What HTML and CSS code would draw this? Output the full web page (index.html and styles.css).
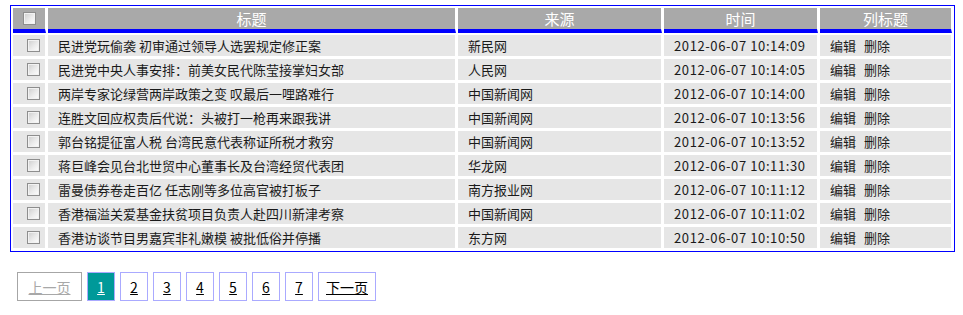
FILE: index.html
```html
<!DOCTYPE html>
<html lang="zh">
<head>
<meta charset="utf-8">
<title>列表</title>
<link rel="stylesheet" href="styles.css">
</head>
<body>
<div class="box">
  <table class="grid">
    <thead>
      <tr>
        <th class="c-chk"><input type="checkbox" class="chk"></th>
        <th class="c-title">标题</th>
        <th class="c-src">来源</th>
        <th class="c-time">时间</th>
        <th class="c-op">列标题</th>
      </tr>
    </thead>
    <tbody>
      <tr><td class="chk-cell"><input type="checkbox" class="chk"></td><td>民进党玩偷袭 初审通过领导人选罢规定修正案</td><td>新民网</td><td class="time">2012-06-07 10:14:09</td><td class="ops"><a>编辑</a><a>删除</a></td></tr>
      <tr><td class="chk-cell"><input type="checkbox" class="chk"></td><td>民进党中央人事安排：前美女民代陈莹接掌妇女部</td><td>人民网</td><td class="time">2012-06-07 10:14:05</td><td class="ops"><a>编辑</a><a>删除</a></td></tr>
      <tr><td class="chk-cell"><input type="checkbox" class="chk"></td><td>两岸专家论绿营两岸政策之变 叹最后一哩路难行</td><td>中国新闻网</td><td class="time">2012-06-07 10:14:00</td><td class="ops"><a>编辑</a><a>删除</a></td></tr>
      <tr><td class="chk-cell"><input type="checkbox" class="chk"></td><td>连胜文回应权贵后代说：头被打一枪再来跟我讲</td><td>中国新闻网</td><td class="time">2012-06-07 10:13:56</td><td class="ops"><a>编辑</a><a>删除</a></td></tr>
      <tr><td class="chk-cell"><input type="checkbox" class="chk"></td><td>郭台铭提征富人税 台湾民意代表称证所税才救穷</td><td>中国新闻网</td><td class="time">2012-06-07 10:13:52</td><td class="ops"><a>编辑</a><a>删除</a></td></tr>
      <tr><td class="chk-cell"><input type="checkbox" class="chk"></td><td>蒋巨峰会见台北世贸中心董事长及台湾经贸代表团</td><td>华龙网</td><td class="time">2012-06-07 10:11:30</td><td class="ops"><a>编辑</a><a>删除</a></td></tr>
      <tr><td class="chk-cell"><input type="checkbox" class="chk"></td><td>雷曼债券卷走百亿 任志刚等多位高官被打板子</td><td>南方报业网</td><td class="time">2012-06-07 10:11:12</td><td class="ops"><a>编辑</a><a>删除</a></td></tr>
      <tr><td class="chk-cell"><input type="checkbox" class="chk"></td><td>香港福溢关爱基金扶贫项目负责人赴四川新津考察</td><td>中国新闻网</td><td class="time">2012-06-07 10:11:02</td><td class="ops"><a>编辑</a><a>删除</a></td></tr>
      <tr><td class="chk-cell"><input type="checkbox" class="chk"></td><td>香港访谈节目男嘉宾非礼嫩模 被批低俗并停播</td><td>东方网</td><td class="time">2012-06-07 10:10:50</td><td class="ops"><a>编辑</a><a>删除</a></td></tr>
    </tbody>
  </table>
</div>
<div class="pager">
  <span class="pg pg-disabled pg-prev">上一页</span>
  <a class="pg pg-num pg-current">1</a>
  <a class="pg pg-num">2</a>
  <a class="pg pg-num">3</a>
  <a class="pg pg-num">4</a>
  <a class="pg pg-num">5</a>
  <a class="pg pg-num">6</a>
  <a class="pg pg-num">7</a>
  <a class="pg pg-next">下一页</a>
</div>
</body>
</html>
```
FILE: styles.css
```css
html, body {
  margin: 0;
  padding: 0;
  background: #fff;
}
body {
  font-family: "Noto Sans CJK SC", "Noto Sans", sans-serif;
  font-size: 13px;
  color: #1a1a1a;
}
.box {
  width: 943px;
  margin: 5px 0 0 10px;
  border: 1px solid #0000ff;
}
.grid {
  width: 943px;
  table-layout: fixed;
  border-collapse: separate;
  border-spacing: 2px;
}
.grid th,
.grid td {
  box-sizing: border-box;
  padding: 0 0 0 10px;
  border-right: 1px solid #fff;
  vertical-align: middle;
  white-space: nowrap;
  overflow: hidden;
}
.grid th {
  height: 25px;
  background: #a9a9a9;
  border-bottom: 4px solid #0000ff;
  color: #fff;
  font-weight: normal;
  font-size: 15px;
  text-align: center;
  padding: 0;
  line-height: 20px;
}
.grid th.c-chk { text-align: left; padding-left: 10px; }
.c-chk { width: 33px; }
.c-title { width: 408px; }
.c-src { width: 204px; }
.c-time { width: 154px; }
.c-op { width: 132px; }
.grid td {
  height: 22px;
  background: #e6e6e6;
  border-bottom: 1px solid #fff;
  line-height: 20px;
}
.grid td.chk-cell { padding-left: 14px; }
.chk {
  -webkit-appearance: none;
  appearance: none;
  display: block;
  width: 13px;
  height: 13px;
  margin: 0;
  border: 1px solid #8e8e8e;
  background: linear-gradient(135deg, #cdcdcd 0%, #ececec 55%, #ffffff 100%);
  box-shadow: inset 0 0 0 1px #f2f2f2;
  box-sizing: border-box;
}
.grid td.time { letter-spacing: 0.6px; }
.ops a {
  color: #1a1a1a;
  margin-right: 8px;
}
.pager {
  display: flex;
  gap: 5px;
  margin: 20px 0 0 17px;
}
.pg {
  box-sizing: border-box;
  height: 29px;
  display: flex;
  align-items: center;
  justify-content: center;
  font-size: 14px;
  text-decoration: underline;
  border: 1px solid #aaaaff;
  color: #000;
  background: #fff;
}
.pg-num { width: 28px; }
.pg-prev { width: 65px; }
.pg-next { width: 58px; }
.pg-disabled {
  border-color: #a6a6a6;
  color: #a8a8a8;
}
.pg-current {
  background: #009999;
  color: #fff;
}
```
